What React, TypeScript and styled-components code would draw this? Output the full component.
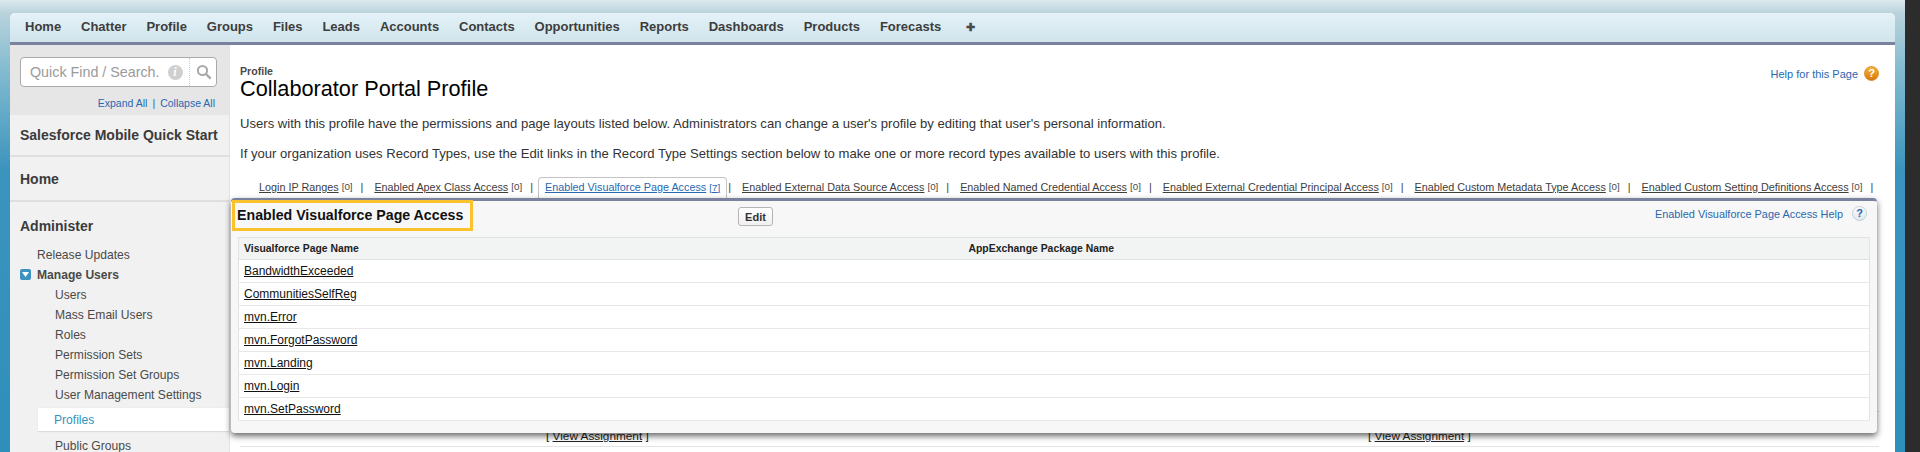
import { Fragment, ReactElement } from "react";
import styled, { createGlobalStyle } from "styled-components";

const NAV_ITEMS = [
  "Home",
  "Chatter",
  "Profile",
  "Groups",
  "Files",
  "Leads",
  "Accounts",
  "Contacts",
  "Opportunities",
  "Reports",
  "Dashboards",
  "Products",
  "Forecasts",
];

const TAB_ITEMS = [
  { label: "Login IP Ranges", count: 0 },
  { label: "Enabled Apex Class Access", count: 0 },
  { label: "Enabled Visualforce Page Access", count: 7, active: true },
  { label: "Enabled External Data Source Access", count: 0 },
  { label: "Enabled Named Credential Access", count: 0 },
  { label: "Enabled External Credential Principal Access", count: 0 },
  { label: "Enabled Custom Metadata Type Access", count: 0 },
  { label: "Enabled Custom Setting Definitions Access", count: 0 },
];

const USER_LINKS = [
  "Users",
  "Mass Email Users",
  "Roles",
  "Permission Sets",
  "Permission Set Groups",
  "User Management Settings",
];

const VF_PAGES = [
  "BandwidthExceeded",
  "CommunitiesSelfReg",
  "mvn.Error",
  "mvn.ForgotPassword",
  "mvn.Landing",
  "mvn.Login",
  "mvn.SetPassword",
];

function HelpIcon({ gold }: { gold?: boolean }): ReactElement {
  const id = gold ? "helpGold" : "helpPale";
  return (
    <svg width="15" height="15" viewBox="0 0 15 15">
      <defs>
        <linearGradient id={id} x1="0" y1="0" x2="0" y2="1">
          <stop offset="0" stopColor={gold ? "#f7b53a" : "#ffffff"} />
          <stop offset="1" stopColor={gold ? "#d9760a" : "#dfe6ee"} />
        </linearGradient>
      </defs>
      <circle
        cx="7.5"
        cy="7.5"
        r="7"
        fill={`url(#${id})`}
        stroke={gold ? "#cf8a1e" : "#b9c4d2"}
        strokeWidth="0.8"
      />
      <text
        x="7.5"
        y="11.4"
        textAnchor="middle"
        fontFamily="Liberation Sans, Arial, sans-serif"
        fontWeight="700"
        fontSize="11"
        fill={gold ? "#ffffff" : "#2a5fae"}
      >
        ?
      </text>
    </svg>
  );
}

export default function App(): ReactElement {
  return (
    <>
      <GlobalStyle />
      <Page>
        <Viewport>
          <Card>
            <TabBar>
              {NAV_ITEMS.map((item) => (
                <NavItem key={item}>{item}</NavItem>
              ))}
              <NavItem>
                <PlusGlyph>✚</PlusGlyph>
              </NavItem>
            </TabBar>
            <Body>
              <Sidebar>
                <SearchArea>
                  <SearchBox>
                    <SearchText>Quick Find / Search.</SearchText>
                    <InfoBadge>i</InfoBadge>
                    <SearchButton>
                      <svg width="16" height="16" viewBox="0 0 16 16" fill="none">
                        <circle cx="6.5" cy="6.5" r="4.6" stroke="#a9a9a9" strokeWidth="2" />
                        <path d="M10 10l4.6 4.6" stroke="#a9a9a9" strokeWidth="2.4" />
                      </svg>
                    </SearchButton>
                  </SearchBox>
                  <ExpandRow>
                    <span>Expand All</span>
                    <span>|</span>
                    <span>Collapse All</span>
                  </ExpandRow>
                </SearchArea>
                <SideHeading $height={42}>Salesforce Mobile Quick Start</SideHeading>
                <SideHeading $height={45}>Home</SideHeading>
                <SideHeadingOpen>Administer</SideHeadingOpen>
                <SideLink $indent={27} $height={18}>
                  Release Updates
                </SideLink>
                <ManageRow>
                  <CollapseIcon>
                    <svg width="7" height="5" viewBox="0 0 7 5">
                      <path d="M0 0h7L3.5 5z" fill="#ffffff" />
                    </svg>
                  </CollapseIcon>
                  Manage Users
                </ManageRow>
                {USER_LINKS.map((link) => (
                  <SideLink key={link} $indent={45} $height={20}>
                    {link}
                  </SideLink>
                ))}
                <SelectedLink>Profiles</SelectedLink>
                <SideLink $indent={45} $height={20}>
                  Public Groups
                </SideLink>
              </Sidebar>
              <Main>
                <PageHeader>
                  <div>
                    <PageType>Profile</PageType>
                    <PageTitle>Collaborator Portal Profile</PageTitle>
                  </div>
                  <PageHelp>
                    Help for this Page
                    <HelpIcon gold />
                  </PageHelp>
                </PageHeader>
                <Intro>
                  Users with this profile have the permissions and page layouts listed below.
                  Administrators can change a user's profile by editing that user's personal
                  information.
                </Intro>
                <Intro>
                  If your organization uses Record Types, use the Edit links in the Record Type
                  Settings section below to make one or more record types available to users with
                  this profile.
                </Intro>
                <TabLinks>
                  {TAB_ITEMS.map((tab) => (
                    <Fragment key={tab.label}>
                      <TabLink $active={tab.active}>
                        <u>{tab.label}</u> <TabCount $active={tab.active}>[{tab.count}]</TabCount>
                      </TabLink>
                      <TabSeparator>|</TabSeparator>
                    </Fragment>
                  ))}
                </TabLinks>
                <SectionSlot>
                  <BehindRow $height={214} />
                  <BehindRow $height={35}>
                    <BehindCell>
                      [ <u>View Assignment</u> ]
                    </BehindCell>
                    <BehindCell>
                      [ <u>View Assignment</u> ]
                    </BehindCell>
                  </BehindRow>
                  <Overlay>
                    <OverlayHeader>
                      <TitleBox>Enabled Visualforce Page Access</TitleBox>
                      <EditButton>Edit</EditButton>
                      <OverlayHelp>
                        Enabled Visualforce Page Access Help
                        <HelpIcon />
                      </OverlayHelp>
                    </OverlayHeader>
                    <PagesTable>
                      <thead>
                        <tr>
                          <HeadCell $width={725}>Visualforce Page Name</HeadCell>
                          <HeadCell>AppExchange Package Name</HeadCell>
                        </tr>
                      </thead>
                      <tbody>
                        {VF_PAGES.map((name) => (
                          <tr key={name}>
                            <PageCell>
                              <u>{name}</u>
                            </PageCell>
                            <PageCell />
                          </tr>
                        ))}
                      </tbody>
                    </PagesTable>
                  </Overlay>
                </SectionSlot>
              </Main>
            </Body>
          </Card>
        </Viewport>
        <DarkStrip />
      </Page>
    </>
  );
}

const GlobalStyle = createGlobalStyle`
  html, body {
    margin: 0;
    padding: 0;
    height: 452px;
    overflow: hidden;
  }

  body {
    font-family: "Liberation Sans", Arial, sans-serif;
  }

  * {
    box-sizing: border-box;
  }
`;

const Page = styled.div`
  display: flex;
  width: 1920px;
  height: 452px;
  overflow: hidden;
`;

const Viewport = styled.div`
  flex: 1;
  min-width: 0;
  display: flex;
  padding: 13px 10px 0;
  background: linear-gradient(
    to bottom,
    #dde9ee 0,
    #b9d3dc 13px,
    #83bbd0 70px,
    #3b94bd 170px,
    #2f8fbb 452px
  );
`;

const DarkStrip = styled.div`
  flex: none;
  width: 15px;
  background: #2c2c2c;
`;

const Card = styled.div`
  flex: 1;
  display: flex;
  flex-direction: column;
  min-width: 0;
  background: #ffffff;
  border-radius: 5px 5px 0 0;
  overflow: hidden;
`;

const TabBar = styled.div`
  flex: none;
  display: flex;
  align-items: center;
  gap: 19.9px;
  height: 32px;
  padding: 0 15px 3px;
  background: linear-gradient(to bottom, #e4f2f8, #d0e4ec);
  border-bottom: 3px solid #7a82a0;
`;

const NavItem = styled.div`
  font-size: 13px;
  font-weight: 700;
  color: #3d3d3d;
`;

const PlusGlyph = styled.span`
  margin-left: 5px;
  font-size: 11px;
  color: #4a4a4a;
`;

const Body = styled.div`
  flex: 1;
  display: flex;
  min-height: 0;
`;

const Sidebar = styled.div`
  flex: none;
  width: 220px;
  background: #f1f1f1;
  color: #4a4a4a;
  border-right: 1px solid #e4e4e4;
`;

const SearchArea = styled.div`
  height: 70px;
  padding: 12px 12px 0 10px;
  background: #e6e6e6;
`;

const SearchBox = styled.div`
  display: flex;
  align-items: center;
  height: 30px;
  padding-left: 9px;
  background: #ffffff;
  border: 1px solid #a9a9a9;
  border-radius: 4px;
`;

const SearchText = styled.span`
  font-size: 14.3px;
  color: #9a9a9a;
  white-space: nowrap;
`;

const InfoBadge = styled.span`
  flex: none;
  display: flex;
  align-items: center;
  justify-content: center;
  width: 15px;
  height: 15px;
  margin-left: 8px;
  border-radius: 50%;
  background: #cfcfcf;
  color: #ffffff;
  font: italic 700 12px "Liberation Serif", serif;
`;

const SearchButton = styled.span`
  flex: 1;
  display: flex;
  align-items: center;
  justify-content: center;
  align-self: stretch;
  margin-left: 6px;
  padding-left: 2px;
  border-left: 1px dotted #cccccc;
`;

const ExpandRow = styled.div`
  display: flex;
  justify-content: flex-end;
  gap: 5px;
  margin-top: 9px;
  padding-right: 2px;
  font-size: 10.5px;
  line-height: 14px;
  color: #2a68b0;
`;

const SideHeading = styled.div<{ $height: number }>`
  display: flex;
  align-items: center;
  height: ${(p) => p.$height}px;
  padding-left: 10px;
  font-size: 14px;
  font-weight: 700;
  color: #3b3b3b;
  background: #f1f1f1;
  border-bottom: 2px solid #dfdfdf;
  white-space: nowrap;
`;

const SideHeadingOpen = styled.div`
  display: flex;
  align-items: center;
  height: 44px;
  padding: 4px 0 0 10px;
  font-size: 14px;
  font-weight: 700;
  color: #3b3b3b;
`;

const SideLink = styled.div<{ $indent: number; $height: number }>`
  display: flex;
  align-items: center;
  height: ${(p) => p.$height}px;
  padding-left: ${(p) => p.$indent}px;
  font-size: 12.1px;
  color: #4a4a4a;
  white-space: nowrap;
`;

const ManageRow = styled.div`
  display: flex;
  align-items: center;
  gap: 6px;
  height: 21px;
  padding-left: 10px;
  font-size: 12.1px;
  font-weight: 700;
  color: #4a4a4a;
`;

const CollapseIcon = styled.span`
  display: flex;
  align-items: center;
  justify-content: center;
  width: 11px;
  height: 11px;
  border-radius: 2px;
  background: #3a93c0;
`;

const SelectedLink = styled.div`
  display: flex;
  align-items: center;
  height: 24px;
  margin: 3px 0 4px 28px;
  padding-left: 16px;
  font-size: 12.1px;
  color: #2f95c0;
  background: #ffffff;
  border-bottom: 1px solid #dcdcdc;
  box-shadow: 0 0 1px #d8d8d8;
`;

const Main = styled.div`
  flex: 1;
  min-width: 0;
  padding: 20px 16px 0 10px;
  background: #ffffff;
  color: #333333;
`;

const PageHeader = styled.div`
  display: flex;
  justify-content: space-between;
  align-items: flex-start;
  height: 39px;
`;

const PageType = styled.div`
  font-size: 10.6px;
  line-height: 12px;
  font-weight: 700;
  color: #4a4a4a;
`;

const PageTitle = styled.div`
  font-size: 21.7px;
  line-height: 24px;
  color: #000000;
`;

const PageHelp = styled.div`
  display: flex;
  align-items: center;
  gap: 6px;
  padding-top: 1px;
  font-size: 11px;
  color: #2a68b0;
`;

const Intro = styled.div`
  height: 30px;
  padding-top: 12px;
  font-size: 13.1px;
  line-height: 15px;
  color: #333333;
  white-space: nowrap;
`;

const TabLinks = styled.div`
  display: flex;
  align-items: flex-end;
  height: 21px;
  margin-top: 13px;
  padding-left: 19px;
  white-space: nowrap;
`;

const TabLink = styled.div<{ $active?: boolean }>`
  display: flex;
  align-items: center;
  gap: 3px;
  height: 21px;
  padding: 0 ${(p) => (p.$active ? "6px" : "0")} 2px;
  margin: 0 ${(p) => (p.$active ? "-7px 0 -6px" : "0")};
  font-size: 10.8px;
  color: ${(p) => (p.$active ? "#2a68b0" : "#3d3d3d")};
  border: ${(p) => (p.$active ? "1px solid #c4c4c4" : "none")};
  border-bottom: none;
  border-radius: 4px 4px 0 0;
`;

const TabCount = styled.span<{ $active?: boolean }>`
  font-size: 9.8px;
  color: ${(p) => (p.$active ? "#2a68b0" : "#4a4a4a")};
  text-decoration: ${(p) => (p.$active ? "underline" : "none")};
`;

const TabSeparator = styled.span`
  display: flex;
  align-items: center;
  height: 21px;
  margin: 0 11px 0 8px;
  padding-bottom: 2px;
  font-size: 10.8px;
  color: #3d3d3d;
`;

const SectionSlot = styled.div`
  position: relative;
`;

const BehindRow = styled.div<{ $height: number }>`
  display: grid;
  grid-template-columns: 822px 1fr;
  align-items: end;
  height: ${(p) => p.$height}px;
  padding: 0 0 3px 306px;
  border-bottom: 1px solid #e3e3e3;
`;

const BehindCell = styled.div`
  font-size: 11.8px;
  color: #222222;
`;

const Overlay = styled.div`
  position: absolute;
  top: 0;
  left: -9px;
  width: 1646px;
  height: 235px;
  padding: 0 7px;
  background: #f7f7f7;
  border-top: 3px solid #7a82a0;
  border-radius: 4px;
  box-shadow: 0 3px 6px rgba(0, 0, 0, 0.6);
`;

const OverlayHeader = styled.div`
  position: relative;
  display: flex;
  align-items: center;
  height: 36px;
`;

const TitleBox = styled.div`
  position: absolute;
  top: -1px;
  left: -6px;
  width: 241px;
  height: 31px;
  padding-left: 2px;
  border: 3px solid #fcc22d;
  font-size: 14.2px;
  line-height: 25px;
  font-weight: 700;
  color: #111111;
  white-space: nowrap;
`;

const EditButton = styled.button`
  position: absolute;
  top: 6px;
  left: 500px;
  width: 35px;
  height: 19px;
  padding: 0;
  font-family: inherit;
  font-size: 11px;
  font-weight: 700;
  color: #333333;
  background: linear-gradient(to bottom, #ffffff, #f0f0f0);
  border: 1px solid #b5b5b5;
  border-radius: 3px;
`;

const OverlayHelp = styled.div`
  position: absolute;
  top: 5px;
  right: 3px;
  display: flex;
  align-items: center;
  gap: 9px;
  font-size: 10.9px;
  color: #2a68b0;
`;

const PagesTable = styled.table`
  width: 100%;
  border-collapse: collapse;
  table-layout: fixed;
  background: #ffffff;
  border: 1px solid #e0e3e5;
`;

const HeadCell = styled.th<{ $width?: number }>`
  width: ${(p) => (p.$width ? `${p.$width}px` : "auto")};
  height: 22px;
  padding: 0 5px;
  text-align: left;
  font-size: 10.4px;
  font-weight: 700;
  color: #222222;
  background: #f2f3f3;
  border-bottom: 1px solid #e0e3e5;
`;

const PageCell = styled.td`
  height: 23px;
  padding: 0 5px;
  font-size: 12px;
  color: #111111;
  border-bottom: 1px solid #e8e8e8;
`;
